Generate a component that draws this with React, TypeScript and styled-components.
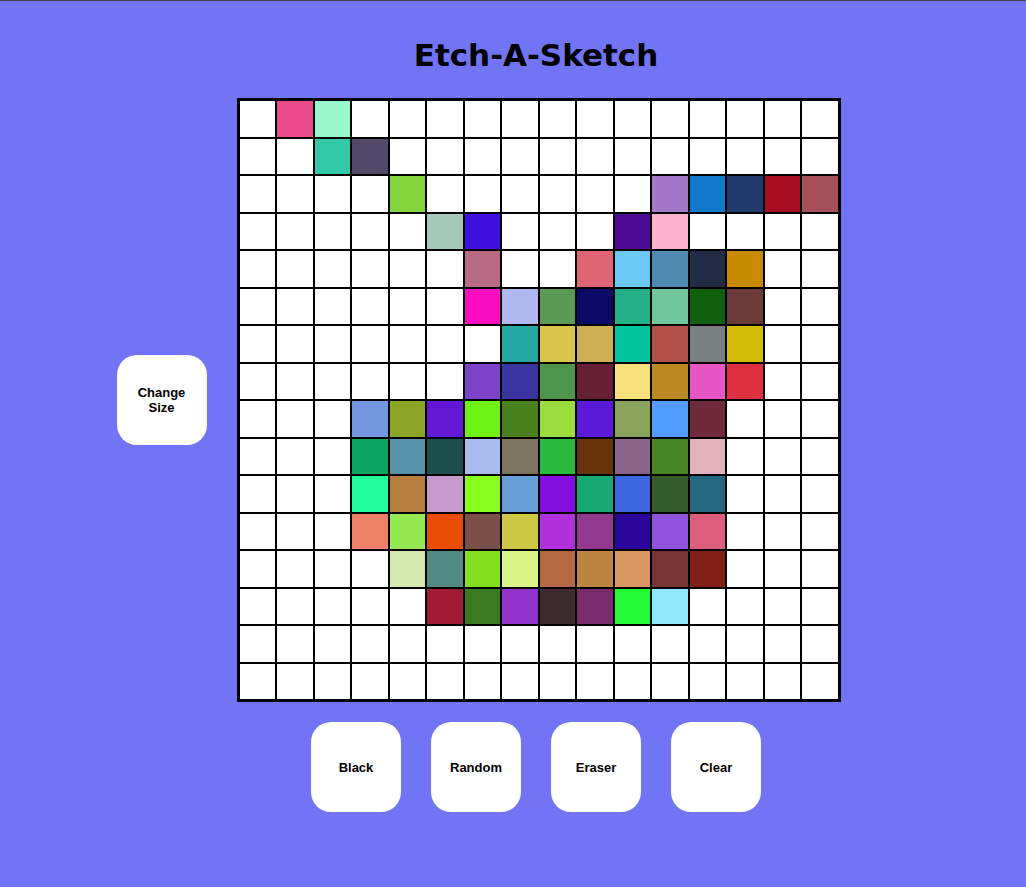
import styled, { createGlobalStyle } from "styled-components";

const GlobalStyle = createGlobalStyle`
    html, body {
        margin: 0;
        padding: 0;
    }

    body {
        background-color: #7174f5;
        border-top: 1px solid #444;
        font-family: "Liberation Sans", Arial, sans-serif;
    }
`

const Page = styled.div`
    display: flex;
    flex-direction: column;
    align-items: center;
    padding-left: 46px;
    min-height: 100vh;
    box-sizing: border-box;
`

const Title = styled.h1`
    font-family: "DejaVu Sans", Verdana, sans-serif;
    font-size: 31px;
    font-weight: bold;
    color: #000;
    margin: 36px 0 25px;
    line-height: normal;
`

const Middle = styled.div`
    display: grid;
    grid-template-columns: 90px 604px 90px;
    column-gap: 30px;
    align-items: center;
    padding-left: 5px;
`

const Board = styled.div`
    display: grid;
    grid-template-columns: repeat(16, 1fr);
    grid-template-rows: repeat(16, 1fr);
    width: 600px;
    height: 600px;
    border: 2px solid #000;
`

const Cell = styled.div<{ $color: string }>`
    box-sizing: border-box;
    border: 1px solid #000;
    background-color: ${(p) => p.$color};
`

const Controls = styled.div`
    display: flex;
    gap: 30px;
    margin-top: 20px;
`

const Button = styled.button`
    width: 90px;
    height: 90px;
    padding: 0 10px;
    border: none;
    border-radius: 20px;
    background-color: #fff;
    color: #000;
    font-family: "Liberation Sans", Arial, sans-serif;
    font-size: 13px;
    font-weight: bold;
    line-height: 15px;
    cursor: pointer;
`

// painted cells, row -> { column: colour }
const painted: Record<number, Record<number, string>> = {
    0: { 1: "#e94b8a", 2: "#98f7cb" },
    1: { 2: "#31c9a8", 3: "#524868" },
    2: { 4: "#84d43c", 11: "#a478c8", 12: "#1278c9", 13: "#213a6e", 14: "#a80d25", 15: "#a85058" },
    3: { 5: "#a5c8bb", 6: "#3e10e0", 10: "#4c0a93", 11: "#fcb1cc" },
    4: { 6: "#b86a84", 9: "#e06675", 10: "#6cc9f5", 11: "#4f8ab2", 12: "#222d45", 13: "#c88a00" },
    5: { 6: "#fa0cc0", 7: "#b0b8f2", 8: "#5b9a55", 9: "#0b0a66", 10: "#25b08a", 11: "#72c69b", 12: "#106010", 13: "#6d3a3a" },
    6: { 7: "#26a8a2", 8: "#d8c54c", 9: "#cdb056", 10: "#04c4a0", 11: "#b0524a", 12: "#7a8080", 13: "#d2bc08" },
    7: { 6: "#7c42c8", 7: "#3a35a0", 8: "#4e964c", 9: "#672033", 10: "#f6e07c", 11: "#bc8a22", 12: "#e855c4", 13: "#dd2f40" },
    8: { 3: "#7495e0", 4: "#8ca526", 5: "#6218d4", 6: "#6ef214", 7: "#49801e", 8: "#9cdc3c", 9: "#5a1ad8", 10: "#8aa45e", 11: "#519cfc", 12: "#712a3c" },
    9: { 3: "#0aa661", 4: "#5692a8", 5: "#1b504c", 6: "#aabbee", 7: "#7c745e", 8: "#2ab93c", 9: "#68340c", 10: "#8a6488", 11: "#488424", 12: "#e2b0ba" },
    10: { 3: "#22fc9a", 4: "#b67e3e", 5: "#c69acc", 6: "#88fc1a", 7: "#689ed6", 8: "#840ee0", 9: "#16a974", 10: "#3a66de", 11: "#365a2c", 12: "#236880" },
    11: { 3: "#ee8268", 4: "#94e852", 5: "#ea4c06", 6: "#7a5048", 7: "#cec844", 8: "#b030dc", 9: "#923a8e", 10: "#2a069c", 11: "#8e52dc", 12: "#dc5e7c" },
    12: { 4: "#d4e8ae", 5: "#528a84", 6: "#84de20", 7: "#daf48a", 8: "#b46844", 9: "#bc8640", 10: "#d89662", 11: "#753532", 12: "#801e18" },
    13: { 5: "#a01a34", 6: "#3a7a20", 7: "#9232cc", 8: "#3c2a2e", 9: "#7a2c6c", 10: "#22f834", 11: "#90e8fc" },
};

const SIZE = 16;

export default function App() {
    const cells = [];
    for (let r = 0; r < SIZE; r++) {
        for (let c = 0; c < SIZE; c++) {
            const color = painted[r]?.[c] ?? "#fff";
            cells.push(<Cell key={`${r}-${c}`} $color={color} />);
        }
    }

    return (
        <>
            <GlobalStyle />
            <Page>
                <Title>Etch-A-Sketch</Title>
                <Middle>
                    <Button>Change Size</Button>
                    <Board>{cells}</Board>
                </Middle>
                <Controls>
                    <Button>Black</Button>
                    <Button>Random</Button>
                    <Button>Eraser</Button>
                    <Button>Clear</Button>
                </Controls>
            </Page>
        </>
    )
}
